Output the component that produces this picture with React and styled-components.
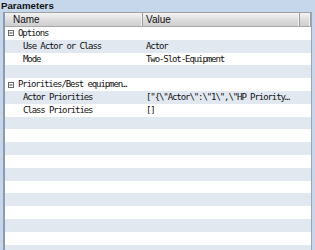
import React from 'react';
import styled, { createGlobalStyle } from 'styled-components';

const GlobalStyle = createGlobalStyle`
    html, body {
        margin: 0;
        padding: 0;
        background-color: #c6d7eb;
        overflow: hidden;
    }
`

const Panel = styled.div`
    display: flex;
    flex-direction: column;
    height: 100vh;
`

const Title = styled.div`
    height: 12px;
    line-height: 11px;
    padding-left: 1px;
    font-family: "Liberation Sans", Arial, sans-serif;
    font-weight: bold;
    font-size: 9.7px;
    color: #111;
`

const Grid = styled.div`
    flex: 1;
    margin: 0 3px 0 3px;
    border-left: 2px solid #8b9bb0;
    border-right: 1px solid #9aa6b4;
    background-color: #fff;
    overflow: hidden;
`

const HeaderRow = styled.div`
    display: grid;
    grid-template-columns: 138px 157px 1fr;
    height: 13px;
    border-top: 1px solid #a0a0a0;
    border-bottom: 1px solid #a8a8a8;
    background: linear-gradient(#f4f4f4, #dcdcdc 55%, #cfcfcf);
`

const HeaderCell = styled.div`
    padding-left: ${p => p.$pad || 3}px;
    border-right: 1px solid #9c9c9c;
    box-shadow: inset -1px 0 0 #f2f2f2;
    font-family: "Liberation Sans", Arial, sans-serif;
    font-size: 10px;
    line-height: 14px;
    color: #111;
    white-space: nowrap;
    overflow: hidden;
`

const Row = styled.div`
    display: grid;
    grid-template-columns: 139px 1fr;
    height: 12.8px;
    background-color: ${p => p.$band ? '#e1e8f0' : '#fff'};
    font-family: "DejaVu Sans Mono", "Liberation Mono", monospace;
    font-size: 9px;
    letter-spacing: -1.08px;
    line-height: 13px;
    color: #111;
`

const NameCell = styled.div`
    display: flex;
    align-items: center;
    gap: 4px;
    padding-left: ${p => p.$child ? 18 : 3}px;
    white-space: nowrap;
    overflow: hidden;
`

const ValueCell = styled.div`
    padding-left: 2px;
    white-space: nowrap;
    overflow: hidden;
`

const Expander = () => (
    <svg width="6" height="6" viewBox="0 0 6 6" style={{ flex: 'none' }}>
        <rect x="0.5" y="0.5" width="5" height="5" fill="#fff" stroke="#6b6b6b" />
        <line x1="1.5" y1="3" x2="4.5" y2="3" stroke="#333" />
    </svg>
)

const rows = [
    { group: true, name: 'Options' },
    { name: 'Use Actor or Class', value: 'Actor' },
    { name: 'Mode', value: 'Two-Slot-Equipment' },
    {},
    { group: true, name: 'Priorities/Best equipmen\u2026' },
    { name: 'Actor Priorities', value: '["{\\"Actor\\":\\"1\\",\\"HP Priority\u2026' },
    { name: 'Class Priorities', value: '[]' },
]

const App = () => {
    const filled = [...rows];
    while (filled.length < 20) filled.push({});

    return (
        <Panel>
            <GlobalStyle />
            <Title>Parameters</Title>
            <Grid>
                <HeaderRow>
                    <HeaderCell $pad={8}>Name</HeaderCell>
                    <HeaderCell>Value</HeaderCell>
                    <HeaderCell />
                </HeaderRow>
                {filled.map((row, i) => (
                    <Row key={i} $band={i % 2 === 1}>
                        <NameCell $child={!row.group}>
                            {row.group && <Expander />}
                            {row.name}
                        </NameCell>
                        <ValueCell>{row.value}</ValueCell>
                    </Row>
                ))}
            </Grid>
        </Panel>
    )
}

export default App;
